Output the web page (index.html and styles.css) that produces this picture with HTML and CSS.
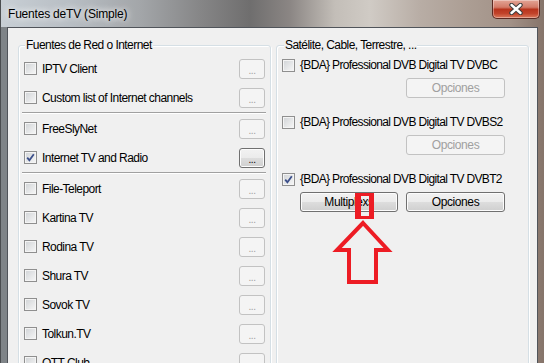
FILE: index.html
```html
<!DOCTYPE html>
<html lang="es">
<head>
  <meta charset="UTF-8" />
  <title>Fuentes deTV (Simple)</title>
  <link rel="stylesheet" href="styles.css">
</head>
<body>
  <div class="window">
    <div class="titlebar">
      <span class="title">Fuentes deTV (Simple)</span>
      <button class="close">
        <svg width="14" height="12" viewBox="0 0 14 12">
          <path d="M2.5 2 L11.5 10 M11.5 2 L2.5 10" stroke="#3d3d3d" stroke-width="4.4" stroke-linecap="round" />
          <path d="M2.5 2 L11.5 10 M11.5 2 L2.5 10" stroke="#fff" stroke-width="2.4" stroke-linecap="round" />
        </svg>
      </button>
    </div>

    <div class="client">
      <div class="group net">
        <span class="legend">Fuentes de Red o Internet</span>
        <div class="row"><span class="check"></span><span class="label">IPTV Client</span><button class="btn dots" disabled>...</button></div>
        <div class="row"><span class="check"></span><span class="label">Custom list of Internet channels</span><button class="btn dots" disabled>...</button></div>
        <div class="sep"></div>
        <div class="row"><span class="check"></span><span class="label">FreeSlyNet</span><button class="btn dots" disabled>...</button></div>
        <div class="row">
          <span class="check">
            <svg width="11" height="11" viewBox="0 0 11 11"><path d="M2.2 5.6 L4.4 8.2 L8.8 2.2" stroke="#3b4f8a" stroke-width="1.8" fill="none" /></svg>
          </span>
          <span class="label">Internet TV and Radio</span><button class="btn dots">...</button>
        </div>
        <div class="sep"></div>
        <div class="row"><span class="check"></span><span class="label">File-Teleport</span><button class="btn dots" disabled>...</button></div>
        <div class="row"><span class="check"></span><span class="label">Kartina TV</span><button class="btn dots" disabled>...</button></div>
        <div class="row"><span class="check"></span><span class="label">Rodina TV</span><button class="btn dots" disabled>...</button></div>
        <div class="row"><span class="check"></span><span class="label">Shura TV</span><button class="btn dots" disabled>...</button></div>
        <div class="row"><span class="check"></span><span class="label">Sovok TV</span><button class="btn dots" disabled>...</button></div>
        <div class="row"><span class="check"></span><span class="label">Tolkun.TV</span><button class="btn dots" disabled>...</button></div>
        <div class="row"><span class="check"></span><span class="label">OTT Club</span><button class="btn dots" disabled>...</button></div>
      </div>

      <div class="group tuners">
        <span class="legend">Satélite, Cable, Terrestre, ...</span>
        <div class="tuner">
          <div class="tuner-row"><span class="check"></span><span class="label">{BDA} Professional DVB Digital TV DVBC</span></div>
          <div class="tuner-btns"><button class="btn wide" disabled>Opciones</button></div>
        </div>
        <div class="tuner">
          <div class="tuner-row"><span class="check"></span><span class="label">{BDA} Professional DVB Digital TV DVBS2</span></div>
          <div class="tuner-btns"><button class="btn wide" disabled>Opciones</button></div>
        </div>
        <div class="tuner">
          <div class="tuner-row">
            <span class="check">
              <svg width="11" height="11" viewBox="0 0 11 11"><path d="M2.2 5.6 L4.4 8.2 L8.8 2.2" stroke="#3b4f8a" stroke-width="1.8" fill="none" /></svg>
            </span>
            <span class="label">{BDA} Professional DVB Digital TV DVBT2</span>
          </div>
          <div class="tuner-btns">
            <button class="btn multi">Multiplexs</button>
            <button class="btn wide">Opciones</button>
          </div>
        </div>
      </div>
    </div>
  </div>

  <!-- marca roja dibujada encima -->
  <svg class="annotation" width="544" height="363" viewBox="0 0 544 363">
    <path d="M355 193 h19 v26 h-19 z M361 196 v20 h8 v-20 z" fill="#ed1c24" fill-rule="evenodd" />
    <polygon points="363,223 388,250 376,250 376,282 349,282 349,250 337,250" fill="none" stroke="#ed1c24" stroke-width="4" />
  </svg>
</body>
</html>
```

FILE: styles.css
```css
body {
  margin: 0;
  width: 544px;
  height: 363px;
  overflow: hidden;
  position: relative;
  font-family: "Liberation Sans", Arial, sans-serif;
  font-size: 12px;
  color: #000;
  background: linear-gradient(90deg, #c8cfd5 0px, #b8bec4 70px, #a3a6a9 140px, #868687 200px, #6f6e6e 250px, #8b8684 290px, #c3beb8 335px, #d0cbc5 370px, #b8ada5 420px, #ab9d93 470px, #a29187 510px, #86746a 544px);
}

.window {
  border-left: 1px solid #4a4d50;
  padding-left: 6px;
}

.titlebar {
  height: 27px;
  display: flex;
  align-items: center;
}

.title {
  padding-left: 1px;
  letter-spacing: -0.2px;
  text-shadow: 0 0 6px #fff, 0 0 10px rgba(255, 255, 255, 0.8);
}

.close {
  margin-left: auto;
  margin-right: 4px;
  align-self: flex-start;
  width: 48px;
  height: 19px;
  padding: 0;
  border: 1px solid #5b2a22;
  border-top: none;
  border-radius: 0 0 5px 5px;
  background: linear-gradient(#e3a596 0%, #d37b68 40%, #b8341d 52%, #c2432a 75%, #db7a5c 100%);
  box-shadow: inset 0 0 0 1px rgba(255, 255, 255, 0.35);
  display: flex;
  align-items: center;
  justify-content: center;
}

.client {
  box-sizing: border-box;
  width: 531px;
  height: 340px;
  border: 1px solid #50545a;
  border-bottom: none;
  background: #f0f0f0;
  display: flex;
  gap: 5px;
  padding: 17px 8px 0 10px;
  box-shadow: -6px 0 0 #7f8488;
}

.group {
  box-sizing: border-box;
  width: 253px;
  height: 330px;
  border: 1px solid #d5dfe5;
  border-radius: 3px;
  box-shadow: inset 1px 1px 0 #fff, 1px 1px 0 #fff;
  position: relative;
}

.net {
  padding: 8px 4px 0;
}

.tuners {
  padding: 10px 23px 0 5px;
}

.legend {
  position: absolute;
  top: -8px;
  left: 7px;
  padding: 0 1px;
  line-height: 14px;
  background: #f0f0f0;
  letter-spacing: -0.55px;
  white-space: nowrap;
}

.net .legend {
  left: 6px;
}

.row {
  display: flex;
  align-items: center;
  height: 29px;
}

.check {
  flex: none;
  box-sizing: border-box;
  width: 13px;
  height: 13px;
  margin: 0 5px 0 1px;
  border: 1px solid #8f8f8f;
  background: linear-gradient(135deg, #d0d3d6, #f7f7f7);
  box-shadow: inset 0 0 0 1px #f4f4f4;
  display: flex;
  align-items: center;
  justify-content: center;
}

.label {
  flex: 1;
  letter-spacing: -0.55px;
  white-space: nowrap;
}

.tuner-row .label {
  letter-spacing: -0.65px;
}

.sep {
  height: 1px;
  margin: 0 0 1px -1px;
  background: #a0a0a0;
  box-shadow: 0 1px 0 #fff;
}

.btn {
  box-sizing: border-box;
  height: 20px;
  padding: 0;
  border: 1px solid #707070;
  border-radius: 3px;
  background: linear-gradient(#f2f2f2, #ebebeb 50%, #dddddd 50%, #cfcfcf);
  box-shadow: inset 0 0 0 1px #fcfcfc;
  font-family: "Liberation Sans", Arial, sans-serif;
  font-size: 12px;
  letter-spacing: -0.4px;
  color: #000;
}

.btn:disabled {
  border-color: #c2c2c2;
  background: #f4f4f4;
  box-shadow: none;
  color: #a0a0a0;
}

.dots {
  flex: none;
  width: 26px;
  margin-right: 1px;
  font-size: 10px;
  line-height: 22px;
}

.tuner {
  margin-bottom: 15px;
}

.tuner-row {
  display: flex;
  align-items: center;
  height: 18px;
}

.tuner-row .check {
  margin-left: 0;
}

.tuner-btns {
  display: flex;
  justify-content: flex-end;
  gap: 8px;
  margin-top: 4px;
}

.wide {
  width: 99px;
}

.multi {
  width: 98px;
}

.annotation {
  position: absolute;
  left: 0;
  top: 0;
  pointer-events: none;
}
```
